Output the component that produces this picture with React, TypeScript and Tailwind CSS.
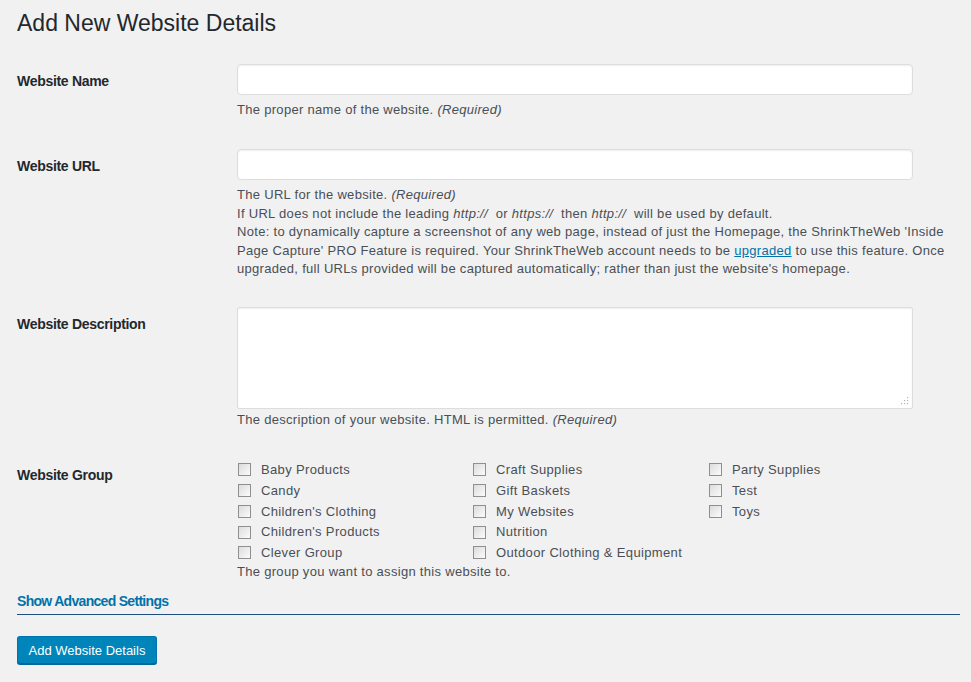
import React from "react";

const groupColumns = [
  ["Baby Products", "Candy", "Children's Clothing", "Children's Products", "Clever Group"],
  ["Craft Supplies", "Gift Baskets", "My Websites", "Nutrition", "Outdoor Clothing & Equipment"],
  ["Party Supplies", "Test", "Toys"],
];

function Checkbox({ label }: { label: string }) {
  return (
    <label className="flex items-center h-[20.75px] cursor-pointer">
      <span className="ml-[1px] w-[13px] h-[13px] border border-[#8f8f8f] bg-gradient-to-br from-[#dcdcdc] to-[#fbfbfb]" />
      <span className="ml-[10px] whitespace-nowrap">{label}</span>
    </label>
  );
}

function Label({ children, className = "" }: { children: React.ReactNode; className?: string }) {
  return (
    <div className={"w-[220px] shrink-0 text-[14px] leading-[18px] font-bold tracking-[-0.3px] text-[#23282d] " + className}>
      {children}
    </div>
  );
}

export default function App() {
  return (
    <div className="min-h-screen bg-[#f1f1f1] pl-[17px] pr-[11px] font-['Liberation_Sans',Arial,sans-serif] text-[#23282d]">
      <h1 className="pt-[9px] text-[23px] leading-[29px] font-normal">Add New Website Details</h1>

      {/* Website Name */}
      <div className="flex mt-[26px]">
        <Label className="pt-[8px]">Website Name</Label>
        <div>
          <input className="block w-[676px] h-[31px] bg-white border border-[#dddddd] rounded-[4px] shadow-[inset_0_1px_2px_rgba(0,0,0,0.07)] outline-none" />
          <p className="mt-[6px] text-[13px] leading-[18.5px] tracking-[0.3px] text-[#4a4f55]">
            The proper name of the website. <i>(Required)</i>
          </p>
        </div>
      </div>

      {/* Website URL */}
      <div className="flex mt-[29.5px]">
        <Label className="pt-[8px]">Website URL</Label>
        <div>
          <input className="block w-[676px] h-[31px] bg-white border border-[#dddddd] rounded-[4px] shadow-[inset_0_1px_2px_rgba(0,0,0,0.07)] outline-none" />
          <p className="mt-[6px] text-[13px] leading-[18.5px] tracking-[0.3px] text-[#4a4f55] whitespace-nowrap">
            The URL for the website. <i>(Required)</i>
            <br />
            If URL does not include the leading <i>http://</i>{"\u00a0 "}or <i>https://</i>{"\u00a0 "}then <i>http://</i>
            {"\u00a0 "}will be used by default.
            <br />
            Note: to dynamically capture a screenshot of any web page, instead of just the Homepage, the ShrinkTheWeb 'Inside
            <br />
            Page Capture' PRO Feature is required. Your ShrinkTheWeb account needs to be{" "}
            <a href="#" className="text-[#0073aa] underline">upgraded</a> to use this feature. Once
            <br />
            upgraded, full URLs provided will be captured automatically; rather than just the website's homepage.
          </p>
        </div>
      </div>

      {/* Website Description */}
      <div className="flex mt-[28.5px]">
        <Label className="pt-[8px]">Website Description</Label>
        <div>
          <div className="relative">
            <textarea className="block w-[676px] h-[102px] bg-white border border-[#dddddd] rounded-[2px] shadow-[inset_0_1px_2px_rgba(0,0,0,0.07)] outline-none resize-none" />
            <svg className="absolute right-[4px] bottom-[4px]" width="8" height="8" viewBox="0 0 8 8">
              <rect x="6" y="0" width="1.2" height="1.2" fill="#b4b4b4" />
              <rect x="3" y="3" width="1.2" height="1.2" fill="#b4b4b4" />
              <rect x="6" y="3" width="1.2" height="1.2" fill="#b4b4b4" />
              <rect x="0" y="6" width="1.2" height="1.2" fill="#b4b4b4" />
              <rect x="3" y="6" width="1.2" height="1.2" fill="#b4b4b4" />
              <rect x="6" y="6" width="1.2" height="1.2" fill="#b4b4b4" />
            </svg>
          </div>
          <p className="mt-[2px] text-[13px] leading-[18.5px] tracking-[0.3px] text-[#4a4f55]">
            The description of your website. HTML is permitted. <i>(Required)</i>
          </p>
        </div>
      </div>

      {/* Website Group */}
      <div className="flex mt-[30px]">
        <Label className="pt-[6.5px]">Website Group</Label>
        <div className="text-[13px] tracking-[0.35px] text-[#4a4f55]">
          <div className="grid grid-cols-[235px_236px_auto]">
            {groupColumns.map((col, i) => (
              <div key={i}>
                {col.map((g) => (
                  <Checkbox key={g} label={g} />
                ))}
              </div>
            ))}
          </div>
          <p className="leading-[18.5px] tracking-[0.3px]">The group you want to assign this website to.</p>
        </div>
      </div>

      <div className="mt-[10px] text-[14px] leading-[18px] font-bold tracking-[-0.7px] text-[#0073aa]">Show Advanced Settings</div>
      <div className="mt-[4.5px] h-px bg-[#1d4f80]" />

      <button className="mt-[21px] h-[28px] w-[140px] text-[13px] text-white bg-[#0085ba] border border-[#0073aa] border-b-[#006799] rounded-[3px] shadow-[0_1px_0_#006799]">
        Add Website Details
      </button>
    </div>
  );
}
